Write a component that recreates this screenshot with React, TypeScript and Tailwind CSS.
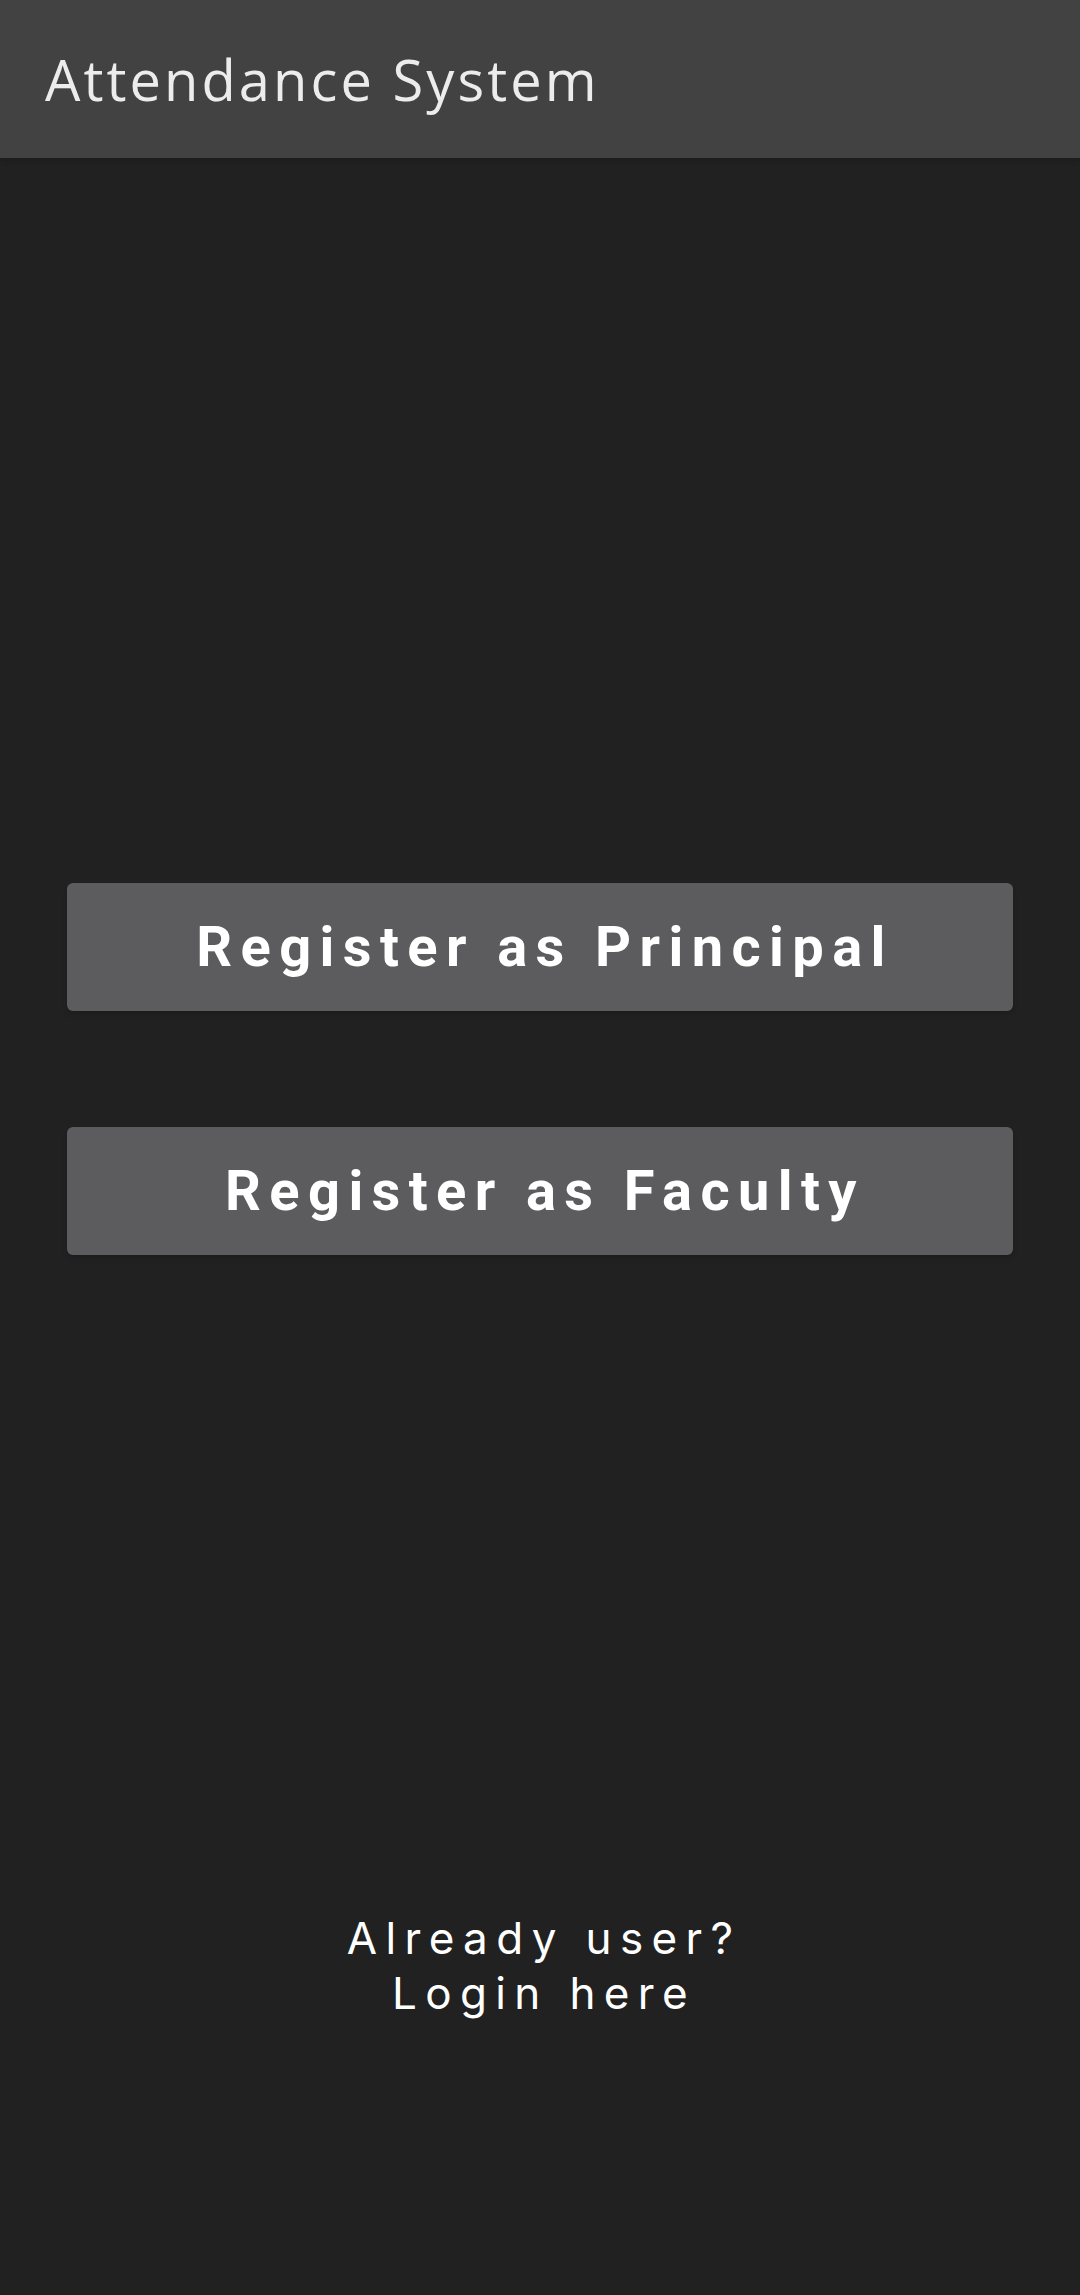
export default function App() {
  return (
    <div className="min-h-[2295px] w-full bg-[#212121] flex flex-col">
      {/* App bar */}
      <header className="h-[158px] bg-[#424242] flex items-center px-[45px] shadow-md">
        <h1 className="font-['Open_Sans',sans-serif] text-[56px] font-normal text-[#ececec] leading-none tracking-[0.055em]">
          Attendance System
        </h1>
      </header>

      <main className="flex flex-col px-[67px] pt-[725px]">
        <button className="h-[128px] w-full rounded-[6px] bg-[#5c5c5e] pl-[10px] font-['Roboto',sans-serif] text-white text-[56px] font-bold tracking-[0.15em] shadow-md">
          Register as Principal
        </button>
        <button className="mt-[116px] h-[128px] w-full rounded-[6px] bg-[#5c5c5e] pl-[10px] font-['Roboto',sans-serif] text-white text-[56px] font-bold tracking-[0.15em] shadow-md">
          Register as Faculty
        </button>

        <div className="mt-[656px] flex flex-col items-center pl-[8px] font-['Inter',sans-serif] text-white text-[44px] leading-[55px] tracking-[0.19em]">
          <span>Already user?</span>
          <span>Login here</span>
        </div>
      </main>
    </div>
  );
}
